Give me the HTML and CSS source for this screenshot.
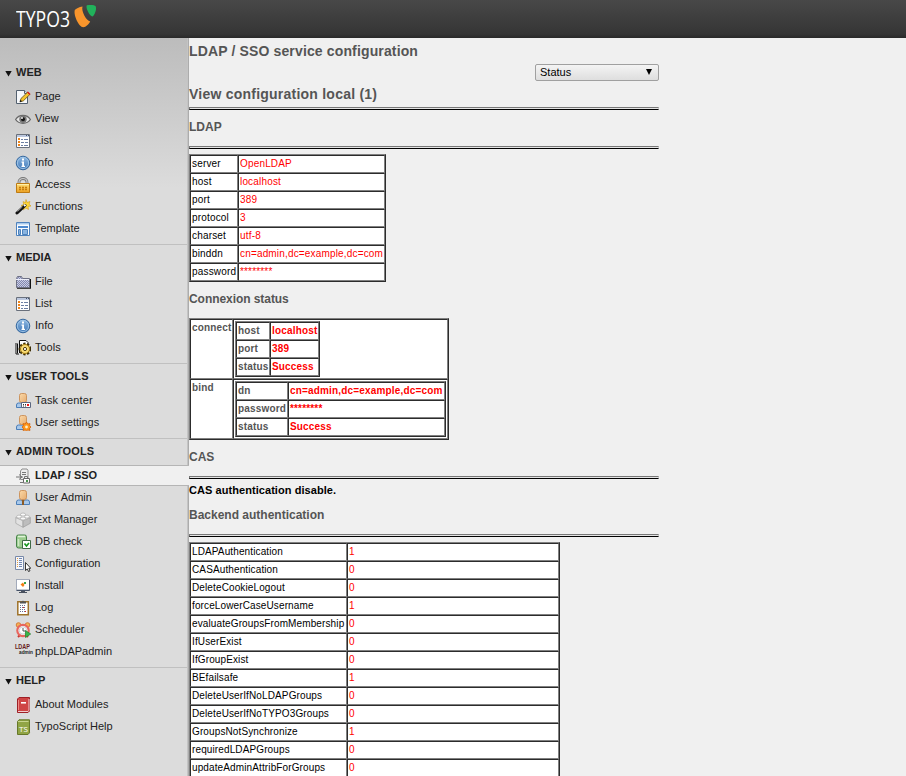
FILE: index.html
```html
<!DOCTYPE html>
<html lang="en">
<head>
<meta charset="utf-8">
<title>TYPO3</title>
<link rel="stylesheet" href="styles.css">
</head>
<body>
<svg class="sprite" aria-hidden="true">
  <defs>
    <linearGradient id="gold" x2="0" y2="1"><stop stop-color="#ffe07a"/><stop offset="1" stop-color="#eca021"/></linearGradient>
    <linearGradient id="skin" x2="1" y2="1"><stop stop-color="#fbd9a8"/><stop offset="1" stop-color="#e6ac70"/></linearGradient>
    <linearGradient id="blue" x2="0" y2="1"><stop stop-color="#8fb9e2"/><stop offset="1" stop-color="#4078b8"/></linearGradient>
    <pattern id="weave" width="2" height="2" patternUnits="userSpaceOnUse"><path fill="#c9cde6" d="M0 0h2v2H0z"/><path fill="#8388ae" d="M0 0h1v1H0zM1 1h1v1H1z"/></pattern>
  </defs>
  <symbol id="i-page" viewBox="0 0 16 16"><path d="M1.500 1.500h8l3 3v10h-11z" fill="#f6f8fb" stroke="#53606f"/><path d="M9.500 1.500v3h3" fill="#dce3ec" stroke="#53606f"/><path d="M5 12.800l1-3.300 6.500-6.300 2.300 2.300-6.500 6.400z" fill="#f5c52c" stroke="#614c1b" stroke-width=".8"/><path d="M12 3.500l1-1 2.500 2.400-1 1z" fill="#dc1d12"/><path d="M4.700 13.200l.8-2.400 1.500 1.500z" fill="#111"/></symbol>
  <symbol id="i-view" viewBox="0 0 16 16"><path d="M.6 8.500C4 3 12 3 15.400 8.500 12 13.600 4 13.600.6 8.500z" fill="#e7e7e7" stroke="#686868" stroke-width="1.300"/><circle cx="8" cy="8.200" r="3.700" fill="#777"/><circle cx="8" cy="8.200" r="2" fill="#151515"/><circle cx="7" cy="7" r="1" fill="#eee"/></symbol>
  <symbol id="i-list" viewBox="0 0 16 16"><path d="M1.500 1.500h13v13h-13z" fill="#fff" stroke="#69707c"/><path d="M2 2h12v2H2z" fill="#bcc8df"/><path d="M11 2h1v1h-1zM13 2h1v1h-1z" fill="#44546f"/><path d="M3 5h2v2H3zM3 8h2v2H3zM3 11h2v2H3z" fill="#f08519"/><path d="M6 6.500h2m1 0h4M6 9.500h3m1 0h3M6 12.500h2m1 0h4" stroke="#6c7fa3"/></symbol>
  <symbol id="i-info" viewBox="0 0 16 16"><circle cx="8" cy="8" r="6.800" fill="url(#blue)" stroke="#38699f"/><circle cx="8" cy="8" r="5.600" fill="none" stroke="#a8cbea" stroke-width=".8"/><path d="M7 3.500h2v2H7zM6.500 6.500H9v4.300h1V12H6.500v-1.200h.7V7.700h-.7z" fill="#fff"/></symbol>
  <symbol id="i-access" viewBox="0 0 16 16"><path d="M4 8V5a4 3.500 0 0 1 8 0V8" fill="none" stroke="#777" stroke-width="2.800"/><path d="M4 8V5a4 3.500 0 0 1 8 0V8" fill="none" stroke="#c9c9c9" stroke-width="1.200"/><path d="M1.500 6.500h13v9h-13z" fill="url(#gold)" stroke="#bd7b13"/><path d="M2 7.500h12" stroke="#fff0a8"/><path d="M4 10.500h2m1 0h2m1 0h2M4 12.500h2m1 0h2m1 0h2" stroke="#c77c0b" stroke-width="1.300"/></symbol>
  <symbol id="i-functions" viewBox="0 0 16 16"><path d="M11 .5l1 3 3-1-1 2.700 2 1.800-3 .5.5 3-2.700-1.500L8 11l.5-3L6 6.500l2.800-1L8 2.600l2.500 1z" fill="#ffd735" stroke="#d39a18" stroke-width=".6"/><path d="M2 14l8-7.500" stroke="#111" stroke-width="3" stroke-linecap="round"/><path d="M2.500 12.500l5-4.700" stroke="#8b8b8b"/><path d="M9 7l1.500-1.300" stroke="#fff" stroke-width="2"/></symbol>
  <symbol id="i-template" viewBox="0 0 16 16"><path d="M1.500 1.500h13v13h-13z" fill="#f8fbff" stroke="#4f82bd"/><path d="M2 2h12v1.500H2z" fill="#a9caec"/><path d="M3 5h10v2H3z" fill="#4d89cf"/><path d="M3.500 8.500h2v5h-2zM7.500 8.500h5v5h-5z" fill="#8ab4e0" stroke="#4c82bd"/></symbol>
  <symbol id="i-file" viewBox="0 0 16 16"><path d="M2 14h13.300V5" fill="none" stroke="#111" stroke-width="1.400"/><path d="M1.500 4.500l1-2h4l1 2h7v9H1.500z" fill="url(#weave)" stroke="#6e7184"/><path d="M1 5.500h13" stroke="#eceefa"/></symbol>
  <symbol id="i-tools" viewBox="0 0 16 16"><path d="M1 3v11h3M4.500 13V.5H11l2 2V7" fill="#fff" stroke="#111"/><path d="M2.500 3.500v10" stroke="#111"/><circle cx="10" cy="9" r="5.200" fill="#fbd754" stroke="#3e2f07" stroke-width="2.400" stroke-dasharray="2.200 1.500"/><circle cx="10" cy="9" r="4.500" fill="#f9dc75" stroke="#a67c16"/><circle cx="10" cy="9" r="1.600" fill="#fff" stroke="#4d3a0d"/></symbol>
  <symbol id="i-user" viewBox="0 0 16 16"><path d="M1.500 14.500V12q0-2 2-2h9q2 0 2 2v2.500z" fill="#a8c8ea" stroke="#4b7eb8"/><rect x="4.500" y=".5" width="7" height="9" rx="2" fill="url(#skin)" stroke="#c98d55" stroke-width=".9"/></symbol>
  <symbol id="i-task" viewBox="0 0 16 16"><use href="#i-user"/><path d="M6.500 9.500h9v5h-9z" fill="#fff" stroke="#5b6780"/><path d="M8 11.500h1m1 0h1M8 13h1m1 0h1" stroke="#333"/><path d="M12 11h2v2h-2z" fill="#f01515"/></symbol>
  <symbol id="i-settings" viewBox="0 0 16 16"><use href="#i-user"/><path d="M11.500 7l1.300 2 2.200-.4-.4 2.100 1.400 1.300-1.400 1.300.4 2.100-2.200-.4-1.300 1-1.300-1-2.200.4.400-2.100L7 12l1.400-1.300L8 8.600l2.200.4z" fill="#ff971c" stroke="#d66208" stroke-width=".8"/><circle cx="11.500" cy="12" r="1.400" fill="#fff0c8"/></symbol>
  <symbol id="i-ldap" viewBox="0 0 16 16"><path d="M5.500 3l1.500-2h5l1 1.500v9H5.500z" fill="#ededed" stroke="#8c8c8c"/><path d="M7 4.500h4M7 6.500h4" stroke="#777"/><path d="M1 9h7M4 6.500l3 2.500-3 2.500" fill="none" stroke="#777"/><path d="M8.500 10.500h6v4.500h-6z" fill="#fff" stroke="#666"/><path d="M5 14.500h4M9.500 10V8.500h3V10" fill="none" stroke="#777"/><path d="M11 12h2v2h-2z" fill="#4c9650"/></symbol>
  <symbol id="i-admin" viewBox="0 0 16 16"><use href="#i-user"/><path d="M6.500 10h3L9 11.500V15H7v-3.500z" fill="#8d5c25"/></symbol>
  <symbol id="i-ext" viewBox="0 0 16 16"><path d="M.8 5.500L8 8.500v6.800l-7.200-4z" fill="#e2e2e2" stroke="#a5a5a5" stroke-width=".7"/><path d="M15.300 5.500L8 8.500v6.800l7.300-4z" fill="#bdbdbd" stroke="#999" stroke-width=".7"/><path d="M.8 5.500L8 2l7.300 3.500L8 8.700z" fill="#eee" stroke="#aaa" stroke-width=".7"/><g fill="#fafafa" stroke="#aaa" stroke-width=".7"><ellipse cx="8" cy="2.500" rx="2.500" ry="1.500"/><ellipse cx="4" cy="4.600" rx="2.300" ry="1.500"/><ellipse cx="12" cy="4.600" rx="2.300" ry="1.500"/><ellipse cx="8" cy="6.500" rx="2.500" ry="1.500"/></g></symbol>
  <symbol id="i-db" viewBox="0 0 16 16"><path d="M1.500 2.500q0-1.500 2-1.500h6q2 0 2 1.500v9.500q0 2-2 2h-6q-2 0-2-2z" fill="#9bcb8e" stroke="#458148"/><path d="M3 2.500h7" stroke="#e0f3d9" stroke-width="1.500"/><path d="M3.500 5v7" stroke="#cde8c4" stroke-width="1.500"/><path d="M7.500 6.500h8v8h-8z" fill="#fff" stroke="#3f6946"/><path d="M9.500 9.500l2 2.500 2.500-3" fill="none" stroke="#16961f" stroke-width="1.700"/></symbol>
  <symbol id="i-config" viewBox="0 0 16 16"><path d="M.5.5h8v13h-8z" fill="#f5f7fb" stroke="#7889a8"/><path d="M2.500 2v10" stroke="#e89a38" stroke-dasharray="1 1"/><path d="M4 2.500h3m-3 2h3m-3 2h3m-3 2h3m-3 2h3" stroke="#7086b2"/><path d="M10.500 6.500v8l1.800-1.600 1.200 2.600 1.500-.7-1.200-2.500h2z" fill="#fff" stroke="#222" stroke-width=".9"/></symbol>
  <symbol id="i-install" viewBox="0 0 16 16"><path d="M1.500 1.500h13v10.500h-13z" fill="#fff" stroke="#8a92a1"/><path d="M1.500 12V1.500h13" fill="none" stroke="#a2aaba"/><path d="M14.500 2v10.500h-13" fill="none" stroke="#455268"/><path d="M6 13h4v1H6zM4 14h8v1H4z" fill="#49515f"/><path d="M5.500 6.500l2.500-2L9.500 7 8 9z" fill="#f47c12"/><path d="M9 4h2v2H9z" fill="#38a34a"/></symbol>
  <symbol id="i-log" viewBox="0 0 16 16"><path d="M2.800 1.800h10.500v13H2.800z" fill="#fff" stroke="#9e7229" stroke-width="1.500"/><path d="M5 3.500v-2h2L8 .5l1 1h2v2z" fill="#555"/><path d="M5 5.500h6M5 7.500h6M5 9.500h6M5 11.500h6" stroke="#68728f" stroke-dasharray="1 1"/><path d="M8 7h1v1H8zM10 11h1v1h-1z" fill="#e32121"/></symbol>
  <symbol id="i-sched" viewBox="0 0 16 16"><circle cx="3.500" cy="3" r="2.300" fill="#f2b256" stroke="#d77a38"/><circle cx="12.500" cy="3" r="2.300" fill="#f2b256" stroke="#d77a38"/><path d="M3 15l2-2m8 2l-2-2" stroke="#c73830" stroke-width="2"/><circle cx="8" cy="8.500" r="5.700" fill="#fff" stroke="#e8665e" stroke-width="2.200"/><circle cx="8" cy="8.500" r="3.700" fill="none" stroke="#c7d0d5"/><path d="M8 6v3h2.500" fill="none" stroke="#555"/><path d="M10.500 8.500l5.200 3.500-5.200 3.500z" fill="#3bb449" stroke="#24802f" stroke-width=".7"/></symbol>
  <symbol id="i-about" viewBox="0 0 16 16"><path d="M2.500 2L4 .5h10.500V14L13 15.500H2.500z" fill="#cf4545" stroke="#9e2026"/><path d="M3 14.500h10l1-1.300V2" fill="none" stroke="#f0cccc"/><path d="M3.500 3v10" stroke="#ef8b87"/><path d="M6 5.500h5" stroke="#fff"/><path d="M6 6.500h5" stroke="#eab1af"/></symbol>
</svg>

<header class="topbar">
  <svg class="logo" width="86" height="30" viewBox="0 0 86 30" role="img" aria-label="TYPO3">
    <text class="logo-text" x="0" y="23" textLength="54" lengthAdjust="spacingAndGlyphs">TYPO3</text>
    <path d="M66.500 2.600C63 3.300 60 4.500 58.800 6.100 57.300 11 62.800 23.200 67.300 23.300 70 23 72.800 20.200 74.200 17.500 70.300 17 65 7.200 66.500 2.600z" fill="#f8952c"/>
    <path d="M70.800 1.200C76 .6 78.500 1.200 79.700 2.200 81 5.600 78.300 11.500 76.500 12.600 73.500 12 69.300 3.500 70.800 1.200z" fill="#21b25b"/>
  </svg>
</header>
<div class="layout">
  <nav class="sidebar">
    <section class="group">
      <h2>WEB</h2>
      <a><svg><use href="#i-page"/></svg>Page</a>
      <a><svg><use href="#i-view"/></svg>View</a>
      <a><svg><use href="#i-list"/></svg>List</a>
      <a><svg><use href="#i-info"/></svg>Info</a>
      <a><svg><use href="#i-access"/></svg>Access</a>
      <a><svg><use href="#i-functions"/></svg>Functions</a>
      <a><svg><use href="#i-template"/></svg>Template</a>
    </section>
    <section class="group">
      <h2>MEDIA</h2>
      <a><svg><use href="#i-file"/></svg>File</a>
      <a><svg><use href="#i-list"/></svg>List</a>
      <a><svg><use href="#i-info"/></svg>Info</a>
      <a><svg><use href="#i-tools"/></svg>Tools</a>
    </section>
    <section class="group">
      <h2 class="wide">USER TOOLS</h2>
      <a><svg><use href="#i-task"/></svg><span class="wide">Task center</span></a>
      <a><svg><use href="#i-settings"/></svg>User settings</a>
    </section>
    <section class="group">
      <h2 class="wide">ADMIN TOOLS</h2>
      <a class="active"><svg><use href="#i-ldap"/></svg>LDAP / SSO</a>
      <a><svg><use href="#i-admin"/></svg>User Admin</a>
      <a><svg><use href="#i-ext"/></svg>Ext Manager</a>
      <a><svg><use href="#i-db"/></svg>DB check</a>
      <a><svg><use href="#i-config"/></svg>Configuration</a>
      <a><svg><use href="#i-install"/></svg>Install</a>
      <a><svg><use href="#i-log"/></svg>Log</a>
      <a><svg><use href="#i-sched"/></svg>Scheduler</a>
      <a><svg class="pla" viewBox="0 0 20 16"><text class="pla-top" x="0" y="6" textLength="15" lengthAdjust="spacingAndGlyphs">LDAP</text><text class="pla-bottom" x="4" y="11" textLength="14" lengthAdjust="spacingAndGlyphs">admin</text></svg>phpLDAPadmin</a>
    </section>
    <section class="group">
      <h2>HELP</h2>
      <a><svg><use href="#i-about"/></svg>About Modules</a>
      <a><svg viewBox="0 0 16 16"><path d="M2.500 2.500L4 .8h10.500v13L13 15.500H2.500z" fill="#91a545" stroke="#667829"/><path d="M3 2.500h10.500" stroke="#c8d58e"/><text class="ts-text" x="4" y="12.500" textLength="9" lengthAdjust="spacingAndGlyphs">TS</text></svg>TypoScript Help</a>
    </section>
  </nav>
  <main class="content">
    <h1>LDAP / SSO service configuration</h1>
    <div class="picker"><div class="select"><span>Status</span><i></i></div></div>
    <h1 class="view-title">View configuration local (1)</h1>
    <hr>
    <h3>LDAP</h3>
    <hr>
    <table class="server">
      <tr><td>server</td><td>OpenLDAP</td></tr>
      <tr><td>host</td><td>localhost</td></tr>
      <tr><td>port</td><td>389</td></tr>
      <tr><td>protocol</td><td>3</td></tr>
      <tr><td>charset</td><td>utf-8</td></tr>
      <tr><td>binddn</td><td>cn=admin,dc=example,dc=com</td></tr>
      <tr><td>password</td><td>********</td></tr>
    </table>
    <h3 class="status-title">Connexion status</h3>
    <table class="status">
      <tr><td>connect</td><td>
        <table class="connect">
          <tr><td>host</td><td>localhost</td></tr>
          <tr><td>port</td><td>389</td></tr>
          <tr><td>status</td><td>Success</td></tr>
        </table>
      </td></tr>
      <tr><td>bind</td><td>
        <table class="bind">
          <tr><td>dn</td><td>cn=admin,dc=example,dc=com</td></tr>
          <tr><td>password</td><td>********</td></tr>
          <tr><td>status</td><td>Success</td></tr>
        </table>
      </td></tr>
    </table>
    <h3>CAS</h3>
    <hr>
    <p class="note">CAS authentication disable.</p>
    <h3>Backend authentication</h3>
    <hr>
    <table class="backend">
      <tr><td>LDAPAuthentication</td><td>1</td></tr>
      <tr><td>CASAuthentication</td><td>0</td></tr>
      <tr><td>DeleteCookieLogout</td><td>0</td></tr>
      <tr><td>forceLowerCaseUsername</td><td>1</td></tr>
      <tr><td>evaluateGroupsFromMembership</td><td>0</td></tr>
      <tr><td>IfUserExist</td><td>0</td></tr>
      <tr><td>IfGroupExist</td><td>0</td></tr>
      <tr><td>BEfailsafe</td><td>1</td></tr>
      <tr><td>DeleteUserIfNoLDAPGroups</td><td>0</td></tr>
      <tr><td>DeleteUserIfNoTYPO3Groups</td><td>0</td></tr>
      <tr><td>GroupsNotSynchronize</td><td>1</td></tr>
      <tr><td>requiredLDAPGroups</td><td>0</td></tr>
      <tr><td>updateAdminAttribForGroups</td><td>0</td></tr>
    </table>
  </main>
</div>
</body>
</html>
```
FILE: styles.css
```css
* { box-sizing: border-box; }
html, body { height: 100%; }
body {
  margin: 0;
  height: 776px;
  overflow: hidden;
  display: flex;
  flex-direction: column;
  background: #f0f0f0;
  color: #222;
  font: 11px/14px "Liberation Sans", Arial, sans-serif;
}
.sprite { position: absolute; width: 0; height: 0; }
.topbar {
  flex: none;
  height: 38px;
  padding: 4px 0 0 16px;
  background: linear-gradient(#484848, #353535 34px, #292929);
}
.logo { display: block; }
.logo-text { font: 400 22px "Open Sans", sans-serif; fill: #fff; }
.layout { flex: 1; min-height: 0; display: flex; }

.sidebar {
  flex: none;
  width: 189px;
  padding-top: 21px;
  background:
    linear-gradient(90deg, #c4c4c4 1px, #acacac 1px) right / 2px 100% no-repeat,
    linear-gradient(#bcbcbc, #dcdcdc 150px);
}
.group { border-top: 1px solid #c0c0c0; padding-bottom: 5px; margin-right: 2px; }
.group:first-child { border-color: transparent; }
.group h2 {
  display: flex;
  align-items: center;
  gap: 4px;
  margin: 0;
  height: 25px;
  padding: 0 0 1px 5px;
  font-size: 11px;
}
.group .wide { letter-spacing: .13px; }
.group h2::before {
  content: "";
  width: 7px;
  height: 6px;
  margin-top: 3px;
  background: #111;
  clip-path: polygon(0 0, 100% 0, 50% 100%);
}
.group a {
  display: flex;
  align-items: center;
  height: 22px;
  padding-left: 15px;
}
.group svg { flex: none; width: 16px; height: 16px; margin: 2px 4px 0 0; overflow: visible; }
.group svg.pla { width: 20px; margin: 0; }
.group a.active {
  height: 21px;
  margin: 1px -2px 0 0;
  padding-bottom: 1px;
  border-top: 1px solid #b5b5b5;
  border-bottom: 1px solid #b5b5b5;
  background: #f0f0f0;
  font-weight: bold;
}
.ts-text { font: 8px "Open Sans", sans-serif; fill: #fff; }
.pla-top { font: bold 7px "Liberation Sans", sans-serif; fill: #681c22; }
.pla-bottom { font: bold 6px "Liberation Sans", sans-serif; fill: #222; }

.content { flex: none; width: 470px; color: #000; }
h1, h3 { margin: 0; color: #555; }
h1 { padding-top: 5px; font-size: 14px; line-height: 16px; letter-spacing: .14px; }
h3 { padding-top: 10px; height: 36px; font-size: 12px; line-height: 14px; }
.status-title { letter-spacing: -.06px; }
.picker { display: flex; justify-content: flex-end; padding-top: 5px; }
.select {
  display: flex;
  justify-content: space-between;
  align-items: center;
  width: 124px;
  height: 17px;
  padding: 0 6px 1px 4px;
  border: 1px solid #a0a0a0;
  border-radius: 2px;
  background: linear-gradient(#f4f4f4, #dedede);
}
.select i { border: solid transparent; border-width: 6px 3px 0; border-top-color: #000; }
.view-title { padding-top: 5px; letter-spacing: .23px; }
hr {
  height: 3px;
  margin: 0;
  border: 1px solid;
  border-color: #777 #ccc #000 #777;
  background: #e4e4e4;
}
.view-title + hr { margin-top: 5px; }

table {
  border: 1px solid;
  border-color: #808080 #2c2c2c #2c2c2c #808080;
  border-spacing: 0;
  table-layout: fixed;
  background: #fff;
  font-size: 10px;
  letter-spacing: .17px;
}
td {
  height: 18px;
  padding: 1px;
  border: 1px solid;
  border-color: #2c2c2c #808080 #808080 #2c2c2c;
  vertical-align: top;
  white-space: nowrap;
}
td + td { color: #f00; }
.server { width: 197px; margin-top: 5px; }
.server td:first-child { width: 48px; }
.status { width: 260px; font-weight: bold; color: #555; }
.status > tbody > tr > td { height: 60px; }
.status > tbody > tr > td:first-child { width: 43px; }
.status > tbody > tr > td + td { color: #555; }
.status table { color: #555; }
.status table td + td { color: #f00; }
.connect { width: 85px; }
.connect td:first-child { width: 34px; }
.bind { width: 211px; }
.bind td:first-child { width: 52px; }
.backend { width: 371px; margin-top: 5px; letter-spacing: .12px; }
.backend td:first-child { width: 157px; }
.note { margin: 0; padding-top: 4px; height: 19px; font-weight: bold; letter-spacing: .06px; }
```
